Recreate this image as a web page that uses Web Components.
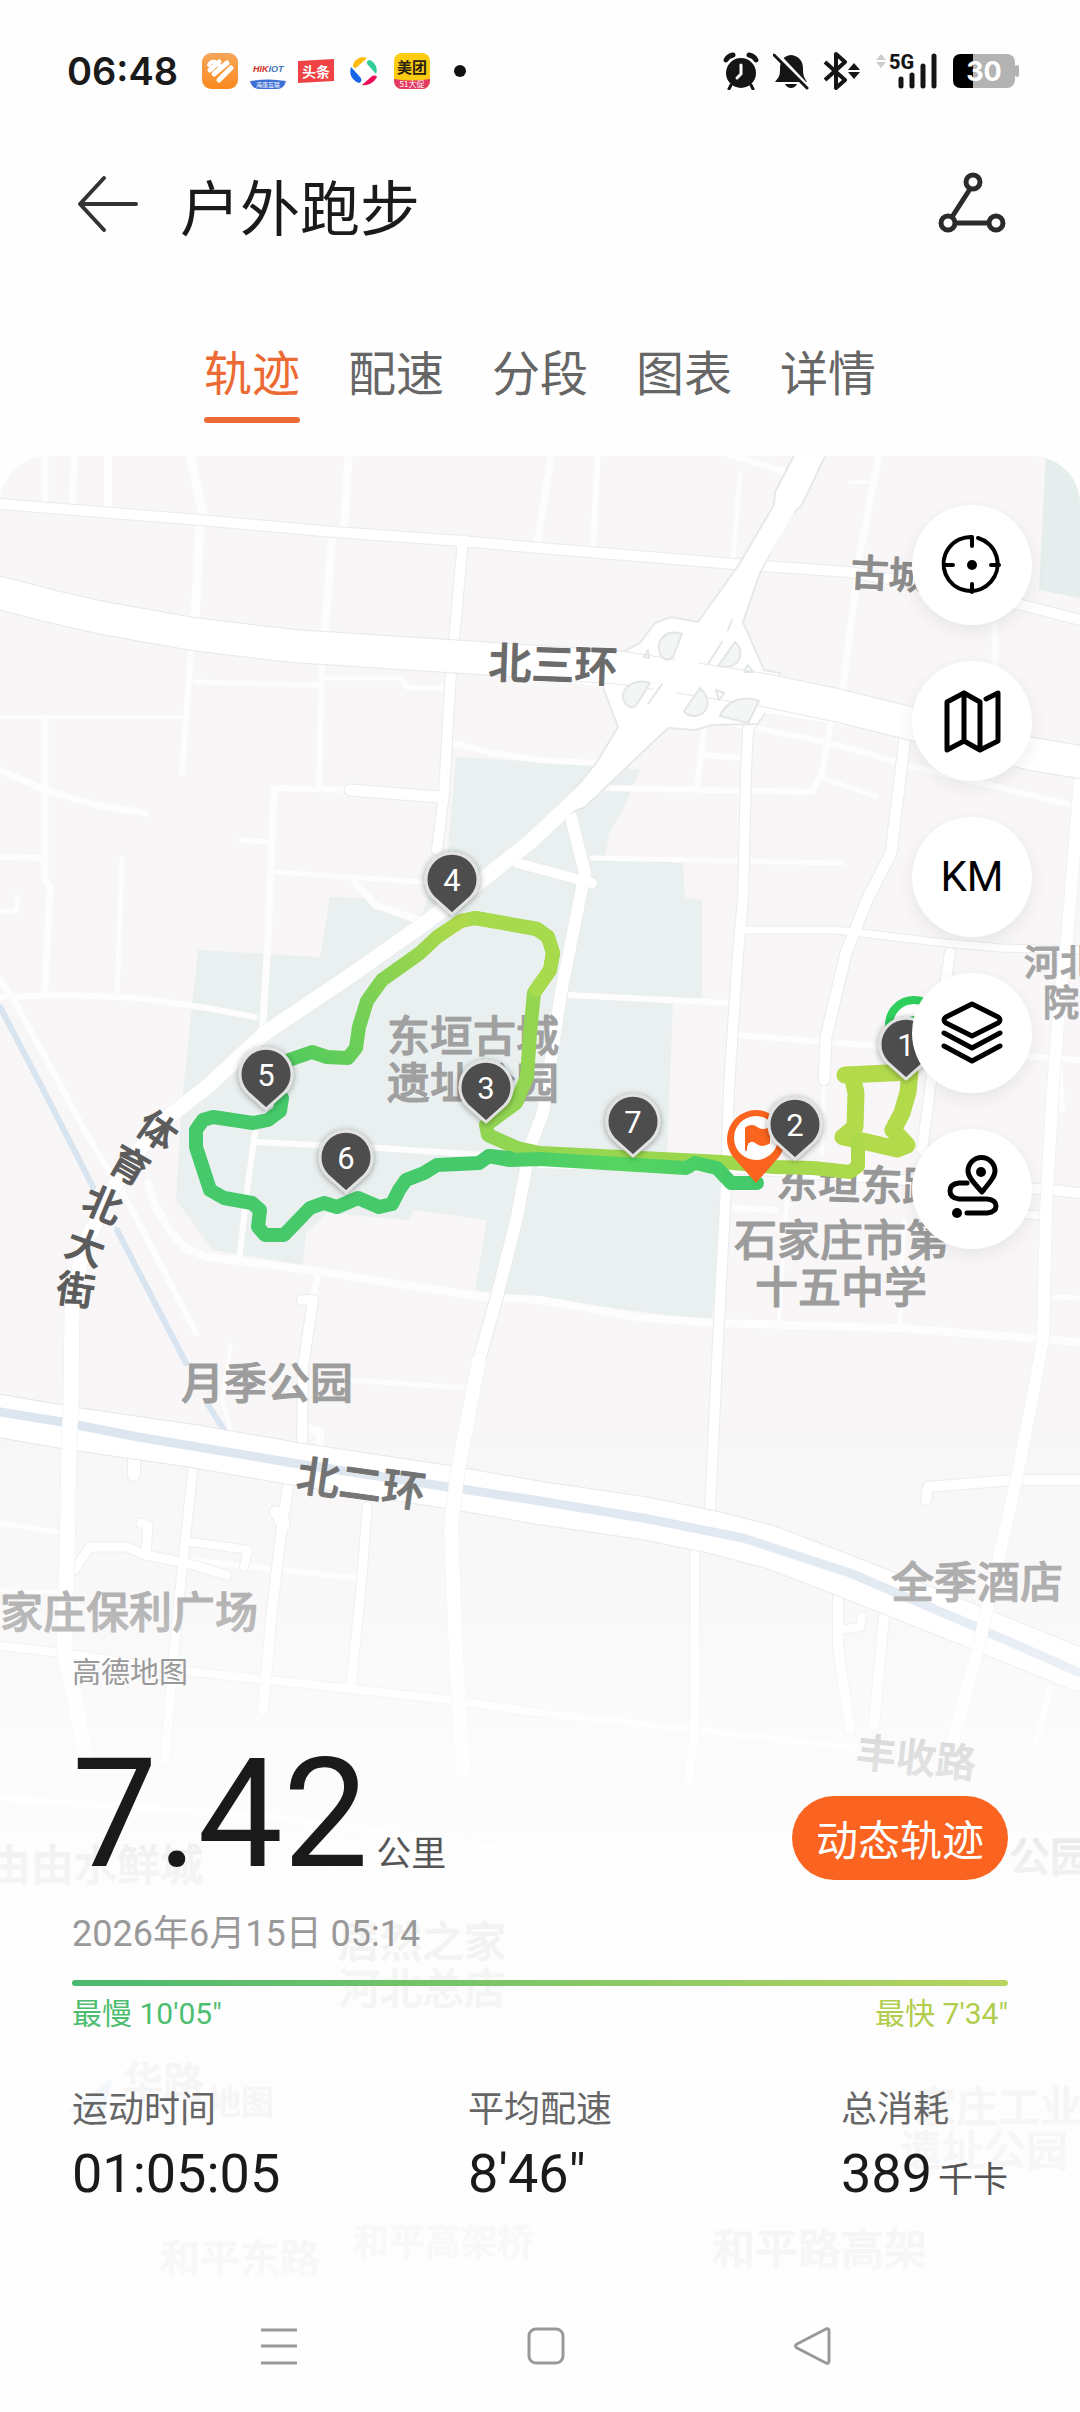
<!DOCTYPE html>
<html lang="zh-CN">
<head>
<meta charset="utf-8">
<meta name="viewport" content="width=device-width, initial-scale=1">
<title>户外跑步</title>
<style>
  :root {
    --accent: #fa6420;
    --ink: #1a1a1a;
    --muted: #666;
    --edge: 72px;
  }
  body {
    margin: 0;
    min-height: 100vh;
    display: flex;
    flex-direction: column;
    background: #fefefe;
    color: var(--ink);
    font-family: Roboto, "Noto Sans CJK SC", sans-serif;
  }
  track-map { flex: 1; }
</style>
</head>
<body>
  <status-bar></status-bar>
  <page-header>户外跑步</page-header>
  <tab-bar tabs="轨迹,配速,分段,图表,详情"></tab-bar>
  <track-map>
    <map-tools slot="tools"></map-tools>
    <run-summary slot="summary">
      <stat-item label="运动时间">01:05:05</stat-item>
      <stat-item label="平均配速">8'46"</stat-item>
      <stat-item label="总消耗" unit="千卡">389</stat-item>
    </run-summary>
    <system-nav slot="summary"></system-nav>
  </track-map>

<script>
// ---- Phone status bar ----
class StatusBar extends HTMLElement {
  connectedCallback() {
    this.attachShadow({ mode: 'open' }).innerHTML = `
      <style>
        :host {
          display: flex;
          align-items: center;
          justify-content: space-between;
          height: 142px;
          padding: 0 61px 0 67px;
        }
        .group { display: flex; align-items: center; gap: 12px; }
        .system { gap: 14px; }
        time { font: 600 38px/48px Inter, sans-serif; margin-right: 12px; }
        svg { display: block; }
        .dot { width: 12px; height: 12px; margin-left: 12px; border-radius: 50%; background: #111; }
      </style>
      <div class="group">
        <time>06:48</time>
        <svg width="36" height="36" viewBox="0 0 36 36">
          <defs><linearGradient id="o" x2="0" y2="1"><stop stop-color="#f5a65a"/><stop offset="1" stop-color="#fb8a1e"/></linearGradient></defs>
          <rect width="36" height="36" rx="9" fill="url(#o)"/>
          <path d="M7 12Q9 8 13 9L17 12" fill="none" stroke="#fff" stroke-width="4" stroke-linecap="round"/>
          <path d="M8 17L17 9M12 21L25 10M17 27L29 15" fill="none" stroke="#fff" stroke-width="5" stroke-linecap="round"/>
        </svg>
        <svg width="36" height="36" viewBox="0 0 36 36">
          <text x="3" y="19" font-family="Liberation Sans" font-size="9" font-weight="700" font-style="italic" fill="#cf2e25">HIK<tspan fill="#3d78b8">IOT</tspan></text>
          <path d="M0 28q18-3 36 0q-2 8-9 8H9q-7 0-9-8z" fill="#3e70d6"/>
          <text x="18" y="34" text-anchor="middle" font-family="Noto Sans CJK SC" font-size="6" fill="#fff">海康互联</text>
        </svg>
        <svg width="36" height="36" viewBox="0 0 36 36">
          <path d="M0 8l36-2v22L0 30z" fill="#ee4245"/>
          <text x="18" y="24" text-anchor="middle" font-family="Noto Sans CJK SC" font-size="14" font-weight="700" fill="#fff">头条</text>
        </svg>
        <svg width="36" height="36" viewBox="0 0 36 36">
          <path d="M7 12C9 5 16 3 21 5L11 14C9 16 7 15 7 12z" fill="#fdbc0c"/>
          <path d="M24 7c6 3 8 9 6 14L22 12c-2-2-1-5 2-5z" fill="#33cd9c"/>
          <path d="M31 24c-3 6-10 9-15 8l9-8c2-2 5-2 6 0z" fill="#ed0e55"/>
          <path d="M13 30C5 27 3 20 5 14l9 10c2 2 2 5-1 6z" fill="#1464e8"/>
        </svg>
        <svg width="36" height="36" viewBox="0 0 36 36">
          <defs><clipPath id="m"><rect width="36" height="36" rx="8"/></clipPath></defs>
          <g clip-path="url(#m)">
            <rect width="36" height="36" fill="#fccb12"/>
            <path d="M0 26q18 3 36 0v10H0z" fill="#e43a63"/>
          </g>
          <text x="18" y="20" text-anchor="middle" font-family="Noto Sans CJK SC" font-size="15" font-weight="700" fill="#28210d">美团</text>
          <text x="18" y="34" text-anchor="middle" font-family="Noto Sans CJK SC" font-size="8" fill="#fff">51大促</text>
        </svg>
        <span class="dot"></span>
      </div>
      <div class="group system">
        <svg width="36" height="38" viewBox="0 0 36 38" fill="none" stroke="#151515" stroke-linecap="round">
          <circle cx="18" cy="21" r="15" fill="#151515" stroke="none"/>
          <path d="M3 8Q5 4 10 3M33 8Q31 4 26 3" stroke-width="5"/>
          <path d="M8 33l-2 4M28 33l2 4" stroke-width="3"/>
          <path d="M18 13v9l-4 4" stroke="#fff" stroke-width="3"/>
        </svg>
        <svg width="36" height="38" viewBox="0 0 36 38">
          <path d="M18 3c8 1 12 6 12 14 0 7 1 8 4 13H2c4-5 5-6 5-13C7 9 10 4 18 3z" fill="#151515"/>
          <path d="M12 32h12q-2 4-6 4t-6-4z" fill="#151515"/>
          <path d="M3 1l33 35" stroke="#fff" stroke-width="4"/>
          <path d="M1 3l33 33" stroke="#151515" stroke-width="3" stroke-linecap="round"/>
        </svg>
        <svg width="38" height="38" viewBox="0 0 38 38">
          <path d="M2 10l20 18-9 8V2l9 8L2 28" fill="none" stroke="#151515" stroke-width="4" stroke-linejoin="round"/>
          <path d="M31 11l6 7H25zM31 27l6-7H25z" fill="#151515"/>
        </svg>
        <svg width="64" height="38" viewBox="0 0 64 38">
          <path d="M6 2l5 6H1zM6 16l5-6H1z" fill="#ccc"/>
          <text x="14" y="17" font-family="Roboto" font-size="20" font-weight="800" fill="#151515">5G</text>
          <path d="M26 27v7M37 23v11M48 14v20M59 4v30" stroke="#151515" stroke-width="5" stroke-linecap="round"/>
        </svg>
        <svg width="66" height="34" viewBox="0 0 66 34">
          <rect width="62" height="34" rx="8" fill="#b3b3b3"/>
          <path d="M20 0H8Q0 0 0 8v18q0 8 8 8h12z"/>
          <rect x="62" y="11" width="4" height="12" rx="2" fill="#b3b3b3"/>
          <text x="31" y="27" text-anchor="middle" font-family="Inter" font-size="27" font-weight="700" fill="#fff">30</text>
        </svg>
      </div>
    `;
  }
}

// ---- Title row: back, title, share ----
class PageHeader extends HTMLElement {
  connectedCallback() {
    this.attachShadow({ mode: 'open' }).innerHTML = `
      <style>
        :host {
          display: flex;
          align-items: center;
          height: 126px;
          padding: 0 var(--edge);
        }
        button { display: block; padding: 0; border: 0; background: none; cursor: pointer; }
        h1 {
          flex: 1;
          margin: 0 0 0 36px;
          font: 400 60px/88px "Noto Sans CJK SC", sans-serif;
        }
        svg { display: block; }
      </style>
      <button aria-label="返回">
        <svg width="72" height="72" viewBox="0 0 72 72" fill="none" stroke="#333" stroke-width="4" stroke-linecap="round" stroke-linejoin="round">
          <path d="M32 9L8 35l24 26M8 35h56"/>
        </svg>
      </button>
      <h1><slot></slot></h1>
      <button aria-label="分享">
        <svg width="72" height="72" viewBox="0 0 72 72" fill="none" stroke="#2b2b2b" stroke-width="5">
          <circle cx="37" cy="13" r="7"/>
          <circle cx="12" cy="54" r="7"/>
          <circle cx="60" cy="54" r="7"/>
          <path d="M34 20L16 48M19 54h34"/>
        </svg>
      </button>
    `;
  }
}

// ---- Tabs ----
class TabBar extends HTMLElement {
  connectedCallback() {
    const tabs = this.getAttribute('tabs').split(',');
    this.attachShadow({ mode: 'open' }).innerHTML = `
      <style>
        :host { display: block; padding: 74px 0 33px; }
        nav { display: flex; justify-content: center; gap: 48px; }
        button {
          display: block;
          padding: 0 0 18px;
          border: 0;
          border-bottom: 6px solid transparent;
          background: none;
          color: var(--muted);
          font: 400 48px/57px "Noto Sans CJK SC", sans-serif;
          cursor: pointer;
        }
        button[aria-selected="true"] { color: #ec6a33; position: relative; }
        button[aria-selected="true"]::after {
          content: '';
          position: absolute;
          left: 0;
          right: 0;
          bottom: -6px;
          height: 6px;
          border-radius: 3px;
          background: #ec6a33;
        }
      </style>
      <nav role="tablist">
        ${tabs.map((t, i) => `<button role="tab" aria-selected="${i === 0}">${t}</button>`).join('')}
      </nav>
    `;
    const buttons = this.shadowRoot.querySelectorAll('button');
    buttons.forEach(b => b.addEventListener('click', () => {
      buttons.forEach(o => o.setAttribute('aria-selected', o === b));
    }));
  }
}

// ---- Map data ----
// side streets, no outline: [width, points]
const LANES = [
  [7, '45,450 45,502'], [7, '75,450 72,504'], [8, '108,450 108,510'],
  [9, '189,450 203,515 200,527 195,618'], [8, '349,450 344,527'], [8, '332,535 325,632'],
  [6, '191,650 182,773'], [5, '195,682 318,685'], [6, '322,663 319,787'],
  [5, '324,678 401,678 408,688 444,688'], [4, '0,717 184,717'],
  [7, '45,720 45,880 50,887 45,990'], [7, '0,770 45,790 96,805 145,813'],
  [6, '0,857 41,858'], [5, '122,858 117,997'], [6, '275,788 348,790'],
  [7, '274,790 268,940 262,1040'], [5, '241,840 268,842'], [5, '274,872 423,882'],
  [7, '355,882 375,905 418,920'], [6, '451,742 492,753 540,760 595,763'],
  [5, '0,912 17,910 17,897'], [7, '552,450 537,545'], [6, '598,450 593,547'],
  [5, '740,473 733,560'], [7, '715,450 785,472'], [7, '880,450 860,553 843,687'],
  [3, '850,482 874,482'], [7, '995,627 995,667'], [6, '831,722 822,773 812,792 605,788'],
  [5, '822,778 877,797'], [6, '716,720 826,742 915,767 1080,807'], [6, '704,730 697,787'],
  [6, '702,755 743,758'], [4, '824,1085 822,1153'], [6, '568,995 729,1003'],
  [6, '738,1035 826,1042 1080,1060'], [5, '592,858 843,863'],
  [6, '255,1142 379,1148 482,1155'], [6, '0,997 69,995 138,998 207,1008 255,1017'],
  [6, '0,980 14,1000 90,1140 127,1200 196,1333'],
  [8, '148,1183 155,1205 169,1230 185,1248 207,1257 310,1270 482,1297 540,1300 643,1318 716,1323 898,1328 1080,1342'],
  [6, '255,1133 248,1183 239,1260'], [5, '348,1380 468,1388'], [4, '231,1345 222,1400 231,1430'],
  [6, '318,1275 312,1300'], [4, '787,1200 779,1320'], [4, '904,1220 900,1325'],
  [6, '733,1208 775,1210'], [5, '0,1523 62,1533'], [4, '0,1590 62,1593'],
  [6, '190,1560 356,1578'], [8, '306,1428 320,1432 320,1446'],
  [6, '540,1713 698,1730 857,1748'], [6, '1050,1688 1036,1743'],
  [6, '1060,1070 1062,1110'], [5, '1055,1297 1080,1298'],
];
// outlined roads
const ROADS = [
  [10, '0,504 200,520 334,532 461,541 540,548 747,565 850,572 940,588 1022,605 1080,620'],
  [10, '463,540 454,640'], [10, '451,670 444,793 437,850'], [11, '350,790 439,797'],
  [10, '760,707 748,730 746,773 743,900 738,953 729,1087 726,1187 717,1360 710,1510'],
  [9, '695,1550 695,1730 688,1780'],
  [11, '905,738 891,853 867,900 846,953 826,1037 824,1080'],
  [7, '743,930 836,930 853,932 936,942 1001,948 1080,950'],
  [10, '950,953 933,1067 922,1150'],
  [10, '540,1163 730,1168 1053,1190 1080,1193'], [8, '1000,1212 1046,1216'],
  [12, '571,817 585,873 561,993 543,1113 530,1147 517,1217 496,1300 479,1360 458,1470'],
  [10, '517,863 592,883'], [10, '302,1300 313,1300 303,1367 302,1450'],
  [12, '134,1457 134,1475'], [9, '193,1468 183,1560 174,1653 165,1760'],
  [9, '74,1570 90,1547 127,1547 145,1555 186,1563 227,1575'], [9, '141,1523 148,1526 146,1553'],
  [8, '191,1542 248,1550 244,1567'], [10, '289,1480 282,1527 272,1610 263,1710'],
  [12, '276,1512 284,1525'], [9, '367,1507 362,1577 351,1687'],
  [8, '0,1646 62,1653 193,1672 269,1680 451,1700 540,1713'],
  [10, '838,1593 838,1647 850,1730'], [10, '884,1615 874,1725'], [8, '840,1630 860,1627 862,1617'],
  [10, '926,1500 928,1487 1012,1480 1080,1480'],
  [8, '0,1798 275,1817 475,1845 689,1877 1047,1930'], [8, '330,1870 322,2250'],
];
// ring roads and trunk streets, drawn over the canal
const TRUNKS = [
  [15, '595,780 561,813 530,842 482,880 424,924 344,980 265,1033 207,1087 155,1127 114,1187 83,1247 72,1310 71,1400 69,1447 67,1560 64,1653 74,1693 86,1760'],
  [14, '479,1360 458,1470 451,1527 456,1653 463,1770'],
  [12, '1080,780 1067,940 1060,1000 1053,1087 1046,1210 1043,1340 1032,1400 1017,1477 991,1593 977,1653 953,1740'],
];

const points = p => 'M' + p.split(' ').join('L');
const layer = (list, extra, color) => list.map(([w, p]) =>
  `<path d="${points(p)}" stroke="${color}" stroke-width="${w + extra}"/>`).join('');

// km markers: number, centre x, centre y
const PINS = [[4, 452, 880], [5, 266, 1075], [3, 486, 1088], [6, 346, 1158], [7, 633, 1122], [2, 795, 1125], [1, 906, 1045]];
const pin = ([n, x, y]) => `
  <g transform="translate(${x} ${y})">
    <path d="M0 34L-19 17A26 26 0 1 1 19 17Z" fill="#4d4d4d" stroke="#e2e2e2" stroke-width="3" filter="url(#drop)"/>
    <text y="11" text-anchor="middle" font-family="Roboto" font-size="31" fill="#fff" stroke="none">${n}</text>
  </g>`;

// place names: text, left, baseline, size, colour, angle
const LABELS = [
  ['北三环', 488, 678, 43, '#6b6b6b', 2], ['古城路', 850, 586, 38, '#8c8c8c', 3],
  ['东垣古城', 387, 1052, 43, '#a0a0a0', 0], ['遗址公园', 387, 1099, 43, '#a0a0a0', 0],
  ['东垣东路', 776, 1197, 42, '#979797', 2], ['石家庄市第', 734, 1256, 43, '#9c9c9c', 0],
  ['十五中学', 755, 1303, 43, '#9c9c9c', 0], ['月季公园', 181, 1399, 43, '#9c9c9c', 0],
  ['北二环', 295, 1490, 43, '#636363', 8], ['全季酒店', 891, 1598, 43, '#999', 0],
  ['家庄保利广场', 0, 1628, 43, '#999', 0], ['丰收路', 855, 1766, 40, '#999', 6],
  ['河北', 1024, 976, 36, '#a5a5a5', 0], ['院', 1043, 1016, 36, '#a5a5a5', 0],
  ['由由水鲜城', -12, 1881, 43, '#999', 0], ['公园', 1009, 1872, 41, '#777', 0],
  ['居然之家', 338, 1957, 42, '#888', 0], ['河北总店', 338, 2004, 42, '#999', 0],
  ['华路', 122, 2097, 41, '#999', 0], ['地图', 208, 2114, 33, '#999', 0],
  ['家庄工业', 914, 2122, 42, '#999', 0], ['遗址公园', 900, 2166, 42, '#999', 0],
  ['和平东路', 160, 2273, 40, '#999', 0], ['和平高架桥', 353, 2255, 36, '#aaa', 0],
  ['和平路高架', 712, 2265, 43, '#888', 0],
];
const label = ([t, x, y, s, c, a]) =>
  `<text x="${x}" y="${y}" font-size="${s}" fill="${c}" stroke="${c}"${a ? ` transform="rotate(${a} ${x} ${y})"` : ''}>${t}</text>`;

class TrackMap extends HTMLElement {
  connectedCallback() {
    const ringN = [[32, '0,593 50,606 103,618 193,634 293,646 448,656 540,662 623,668 764,690 840,706 905,722 1032,754 1080,762']];
    const ringS = [[42, '0,1416 69,1428 193,1446 296,1464 448,1487 540,1503 643,1518 712,1532 770,1547 833,1571 977,1628 1080,1670']];
    const canal = '0,1412 62,1422 138,1437 293,1463 448,1487 540,1501 643,1518 743,1538 850,1573 967,1623 1080,1673';
    this.attachShadow({ mode: 'open' }).innerHTML = `
      <style>
        :host {
          position: relative;
          display: flex;
          flex-direction: column;
          overflow: hidden;
          border-radius: 48px 48px 0 0;
          background: #f8f6f7;
        }
        .canvas { position: absolute; inset: 0; width: 100%; height: 100%; }
        .tools { position: relative; padding: 49px 48px 0 0; align-self: flex-end; }
        .bottom { position: relative; margin-top: auto; }
      </style>
      <svg class="canvas" viewBox="0 456 1080 1956" preserveAspectRatio="xMidYMin slice" fill="none" stroke-linejoin="round" stroke-linecap="round">
        <defs>
          <linearGradient id="fade" gradientUnits="userSpaceOnUse" x1="0" y1="1380" x2="0" y2="2412">
            <stop stop-color="#fefefe" stop-opacity="0"/>
            <stop offset=".2" stop-color="#fefefe" stop-opacity=".22"/>
            <stop offset=".36" stop-color="#fefefe" stop-opacity=".68"/>
            <stop offset=".47" stop-color="#fefefe" stop-opacity=".9"/>
            <stop offset=".85" stop-color="#fefefe" stop-opacity=".93"/>
            <stop offset=".9" stop-color="#fefefe"/>
          </linearGradient>
          <linearGradient id="climb" gradientUnits="userSpaceOnUse" x1="461" y1="921" x2="300" y2="1055">
            <stop stop-color="#b0d94a"/><stop offset="1" stop-color="#55cb5c"/>
          </linearGradient>
          <linearGradient id="out" gradientUnits="userSpaceOnUse" x1="480" y1="0" x2="920" y2="0">
            <stop stop-color="#90d552"/><stop offset=".6" stop-color="#9fd84c"/><stop offset="1" stop-color="#b4da4b"/>
          </linearGradient>
          <linearGradient id="back" gradientUnits="userSpaceOnUse" x1="480" y1="0" x2="757" y2="0">
            <stop stop-color="#45c96a"/><stop offset=".5" stop-color="#57d560"/><stop offset="1" stop-color="#40c96c"/>
          </linearGradient>
          <filter id="drop" x="-30%" y="-30%" width="160%" height="160%">
            <feDropShadow dx="0" dy="1" stdDeviation="3" flood-opacity=".4"/>
          </filter>
        </defs>

        <!-- parks -->
        <g fill="#eaf0f0">
          <path d="M456 757L540 762 595 765 640 770 623 810 609 833 605 857 683 863 685 897 702 900 702 998 673 1000 667 1160 728 1168 712 1320 540 1300 475 1290 487 1220 413 1210 410 1220 327 1213 306 1233 303 1265 213 1250 176 1200 182 1100 198 950 320 957 330 897 365 898 418 923 448 850Z"/>
          <path d="M1046 450H1090V600L1039 590Z" fill="#e6eeed"/>
        </g>

        <!-- streets -->
        ${layer(LANES, 0, '#fdfdfd')}
        <path d="M0 1007L45 1093 93 1187M117 1230L186 1363M207 1403L224 1430" stroke="#d8e4f0" stroke-width="6"/>
        ${layer(ROADS, 2, '#e9ebec')}
        ${layer(ROADS, 0, '#fff')}
        ${layer(ringS, 2, '#e4e6e7')}
        ${layer(ringS, 0, '#fff')}
        <path d="${points(canal)}" stroke="#dbe5ef" stroke-width="9"/>
        ${layer(TRUNKS, 1, '#eceeee')}
        ${layer(TRUNKS, 0, '#fff')}

        <!-- north ring interchange -->
        <g fill="#fff" stroke="#e6e8e9" stroke-width="2">
          <path d="M797 450L775 492 774 505 740 563 698 622 671 617 655 623 640 643 623 652 602 685 618 727 597 762 561 806 568 814 585 807 668 728 695 730 712 725 758 724 770 705 780 673 764 670 743 622 760 573 788 518 802 505 828 450Z"/>
          ${layer(ringN, 2, '#e6e8e9')}
        </g>
        ${layer(ringN, 0, '#fff')}
        <path d="M812 450L785 508 750 568 718 622 678 673 633 735 590 788" stroke="#fff" stroke-width="20"/>
        <path d="M600 775L561 813 530 842" stroke="#fff" stroke-width="15"/>
        <g fill="#f4f5f5" stroke="#e3e6e6" stroke-width="2">
          <path d="M682 634C668 629 657 638 659 650 661 660 668 662 673 657Z"/>
          <path d="M735 642C744 650 742 664 728 667L718 666Z"/>
          <path d="M650 683C635 678 622 687 623 698 625 707 633 710 637 704Z"/>
          <path d="M700 688C709 696 710 706 703 713 696 718 686 716 684 711Z"/>
          <path d="M759 701C741 694 725 703 720 716L748 723Z"/>
          <path d="M644 657L648 650 649 658ZM748 665L753 672H744ZM716 690L724 693 719 700ZM648 704L662 684M708 664L722 642M728 630L732 620" fill="none"/>
        </g>

        <!-- place names -->
        <g font-family="Noto Sans CJK SC" font-weight="500" stroke-width="1">
          ${LABELS.map(label).join('')}
          <text x="134 106 80 63 55" y="1131 1168 1210 1254 1301" rotate="35 30 23 20 8" font-size="38" fill="#5c5c5c" stroke="#5c5c5c">体育北大街</text>
        </g>
        <path d="M68 2112L112 2078 102 2124 90 2112Z" fill="#7fb2e8"/>
        <path d="M-10 1360H1090V2420H-10Z" fill="url(#fade)"/>

        <!-- recorded track -->
        <g stroke-width="14">
          <path d="${points('845,1075 910,1072 908,1092 902,1113 893,1130 907,1145 897,1149 858,1140 843,1137 855,1127 856,1093 852,1075')}" stroke="#b2da4b" stroke-width="17"/>
          <path d="${points('858,1140 858,1166 850,1172 813,1168 774,1167 722,1162 540,1153 517,1148 488,1135 486,1125 516,1103 527,1077 530,1033 534,993 550,970 553,953 548,937 537,929 475,918 461,921')}" stroke="url(#out)"/>
          <path d="${points('536,990 550,970 553,953 548,937 537,929 475,918 461,921')}" stroke="#a8da4d"/>
          <path d="${points('461,921 437,937 420,953 382,980 367,1001 359,1027 356,1048 348,1058 327,1057 312,1052 289,1060')}" stroke="url(#climb)"/>
          <path d="${points('282,1098 280,1111 268,1120 253,1123 213,1117 203,1120 196,1130 196,1147 210,1190 224,1198 252,1203 260,1210 258,1227 265,1235 284,1235 310,1208 324,1203 337,1207 358,1198 379,1207 392,1204 399,1190 406,1180 424,1173 437,1165 479,1163 489,1156 510,1158')}" stroke="#45c96a"/>
          <path d="${points('489,1156 510,1160 540,1159 686,1168 695,1163 717,1168 731,1183 757,1183')}" stroke="url(#back)"/>
        </g>

        <!-- start and finish -->
        <circle cx="914" cy="1025" r="25" fill="#fff" stroke="#2fcf5d" stroke-width="8"/>
        <circle cx="914" cy="1025" r="9" fill="#2fcf5d"/>
        <path d="M756 1183L734 1158A29 29 0 1 1 778 1158Z" fill="#fa641e"/>
        <circle cx="756" cy="1138" r="22" fill="#fff"/>
        <path d="M746 1150V1128Q752 1124 757 1128T769 1128V1143Q762 1147 757 1143T749 1142" fill="#fa641e" stroke="#fa641e" stroke-width="2"/>
        ${PINS.map(pin).join('')}
      </svg>
      <div class="tools"><slot name="tools"></slot></div>
      <div class="bottom"><slot name="summary"></slot></div>
    `;
  }
}

// ---- Round floating map buttons ----
class MapTools extends HTMLElement {
  connectedCallback() {
    this.attachShadow({ mode: 'open' }).innerHTML = `
      <style>
        :host { display: flex; flex-direction: column; gap: 36px; }
        button {
          display: grid;
          place-items: center;
          width: 120px;
          height: 120px;
          padding: 0;
          border: 0;
          border-radius: 50%;
          background: #fff;
          color: #000;
          font: 400 42px/48px Roboto, sans-serif;
          box-shadow: 0 6px 18px rgba(0,0,0,0.07);
          cursor: pointer;
        }
        svg { fill: none; stroke: currentColor; stroke-width: 5; stroke-linecap: round; stroke-linejoin: round; }
      </style>
      <button aria-label="定位">
        <svg width="72" height="72" viewBox="0 0 72 72">
          <path d="M42 9A27 27 0 1 1 36 8V17M9 36h8M63 36h-8M36 63v-8" stroke-width="4"/>
          <circle cx="36" cy="36" r="5" fill="currentColor" stroke="none"/>
        </svg>
      </button>
      <button aria-label="地图类型">
        <svg width="72" height="72" viewBox="0 0 72 72">
          <path d="M11 17L28 8 44 17V65L28 56 11 65ZM28 8v48M44 17v48L62 56V8L50 14"/>
        </svg>
      </button>
      <button aria-label="公里标记">KM</button>
      <button aria-label="图层">
        <svg width="72" height="72" viewBox="0 0 72 72">
          <path d="M36 7L62 20q4 3 0 6L36 39 10 26q-4-3 0-6ZM8 36l28 15 28-15M8 49l28 15 28-15"/>
        </svg>
      </button>
      <button aria-label="路线">
        <svg width="72" height="72" viewBox="0 0 72 72">
          <path d="M46 39C36 28 32 23 32 18a13 13 0 0 1 27 0c0 5-4 10-13 21z"/>
          <circle cx="45" cy="19" r="5" fill="currentColor" stroke="none"/>
          <path d="M31 30h-8q-9 1-9 8t9 8h28q9 1 9 7t-9 7H31"/>
          <circle cx="21" cy="60" r="5" fill="currentColor" stroke="none"/>
        </svg>
      </button>
    `;
  }
}

// ---- Distance, pace range and totals ----
class RunSummary extends HTMLElement {
  connectedCallback() {
    this.attachShadow({ mode: 'open' }).innerHTML = `
      <style>
        :host { display: block; padding: 0 var(--edge) 74px; }
        .credit { color: #999; font: 400 29px/40px "Noto Sans CJK SC", sans-serif; margin-bottom: 52px; }
        .row { display: flex; align-items: flex-end; justify-content: space-between; }
        .distance { font-size: 152px; line-height: 144px; white-space: nowrap; }
        .distance small { margin-left: 8px; font-size: 35px; line-height: 36px; color: #555; }
        button {
          height: 84px;
          padding: 0 24px;
          margin-bottom: 6px;
          border: 0;
          border-radius: 42px;
          background: var(--accent);
          color: #fff;
          font: 400 42px/60px "Noto Sans CJK SC", sans-serif;
          cursor: pointer;
        }
        .date { display: block; margin: 24px 0 22px; color: #999; font-size: 36px; line-height: 48px; }
        .bar { height: 6px; margin-bottom: 8px; border-radius: 3px; background: linear-gradient(90deg, #4ab970, #b8d45e); }
        .pace { font-size: 30px; line-height: 40px; }
        .slow { color: #4dbd70; }
        .fast { color: #b1cd4d; }
        .stats { display: grid; grid-template-columns: 17fr 16fr auto; margin-top: 48px; }
      </style>
      <div class="credit">高德地图</div>
      <div class="row">
        <div class="distance">7.42<small>公里</small></div>
        <button>动态轨迹</button>
      </div>
      <time class="date">2026年6月15日 05:14</time>
      <div class="bar"></div>
      <div class="row pace">
        <span class="slow">最慢 10'05"</span>
        <span class="fast">最快 7'34"</span>
      </div>
      <div class="stats"><slot></slot></div>
    `;
  }
}

class StatItem extends HTMLElement {
  connectedCallback() {
    const unit = this.getAttribute('unit');
    this.attachShadow({ mode: 'open' }).innerHTML = `
      <style>
        :host { display: flex; flex-direction: column; gap: 12px; }
        .label { color: var(--muted); font: 400 36px/48px "Noto Sans CJK SC", sans-serif; }
        .value { font-size: 54px; line-height: 64px; white-space: nowrap; }
        small { margin-left: 6px; font-size: 35px; line-height: 36px; color: #555; }
      </style>
      <span class="label">${this.getAttribute('label')}</span>
      <span class="value"><slot></slot>${unit ? `<small>${unit}</small>` : ''}</span>
    `;
  }
}

// ---- Android navigation keys ----
class SystemNav extends HTMLElement {
  connectedCallback() {
    this.attachShadow({ mode: 'open' }).innerHTML = `
      <style>
        :host {
          display: grid;
          grid-template-columns: repeat(3, 267px);
          justify-content: center;
          place-items: center;
          height: 132px;
          padding-left: 12px;
        }
        button { display: block; padding: 0; border: 0; background: none; cursor: pointer; }
        svg { display: block; fill: none; stroke: #999; stroke-width: 3; stroke-linejoin: round; }
      </style>
      <button aria-label="最近任务">
        <svg width="40" height="40" viewBox="0 0 40 40"><path d="M2 4h36M2 20h36M2 37h36"/></svg>
      </button>
      <button aria-label="主屏幕">
        <svg width="40" height="40" viewBox="0 0 40 40"><rect x="3" y="3" width="34" height="34" rx="7"/></svg>
      </button>
      <button aria-label="返回">
        <svg width="40" height="40" viewBox="0 0 40 40"><path d="M33 3Q36 2 36 5V35Q36 38 33 37L4 22Q1 20 4 18Z"/></svg>
      </button>
    `;
  }
}

customElements.define('status-bar', StatusBar);
customElements.define('page-header', PageHeader);
customElements.define('tab-bar', TabBar);
customElements.define('track-map', TrackMap);
customElements.define('map-tools', MapTools);
customElements.define('run-summary', RunSummary);
customElements.define('stat-item', StatItem);
customElements.define('system-nav', SystemNav);
</script>
</body>
</html>
